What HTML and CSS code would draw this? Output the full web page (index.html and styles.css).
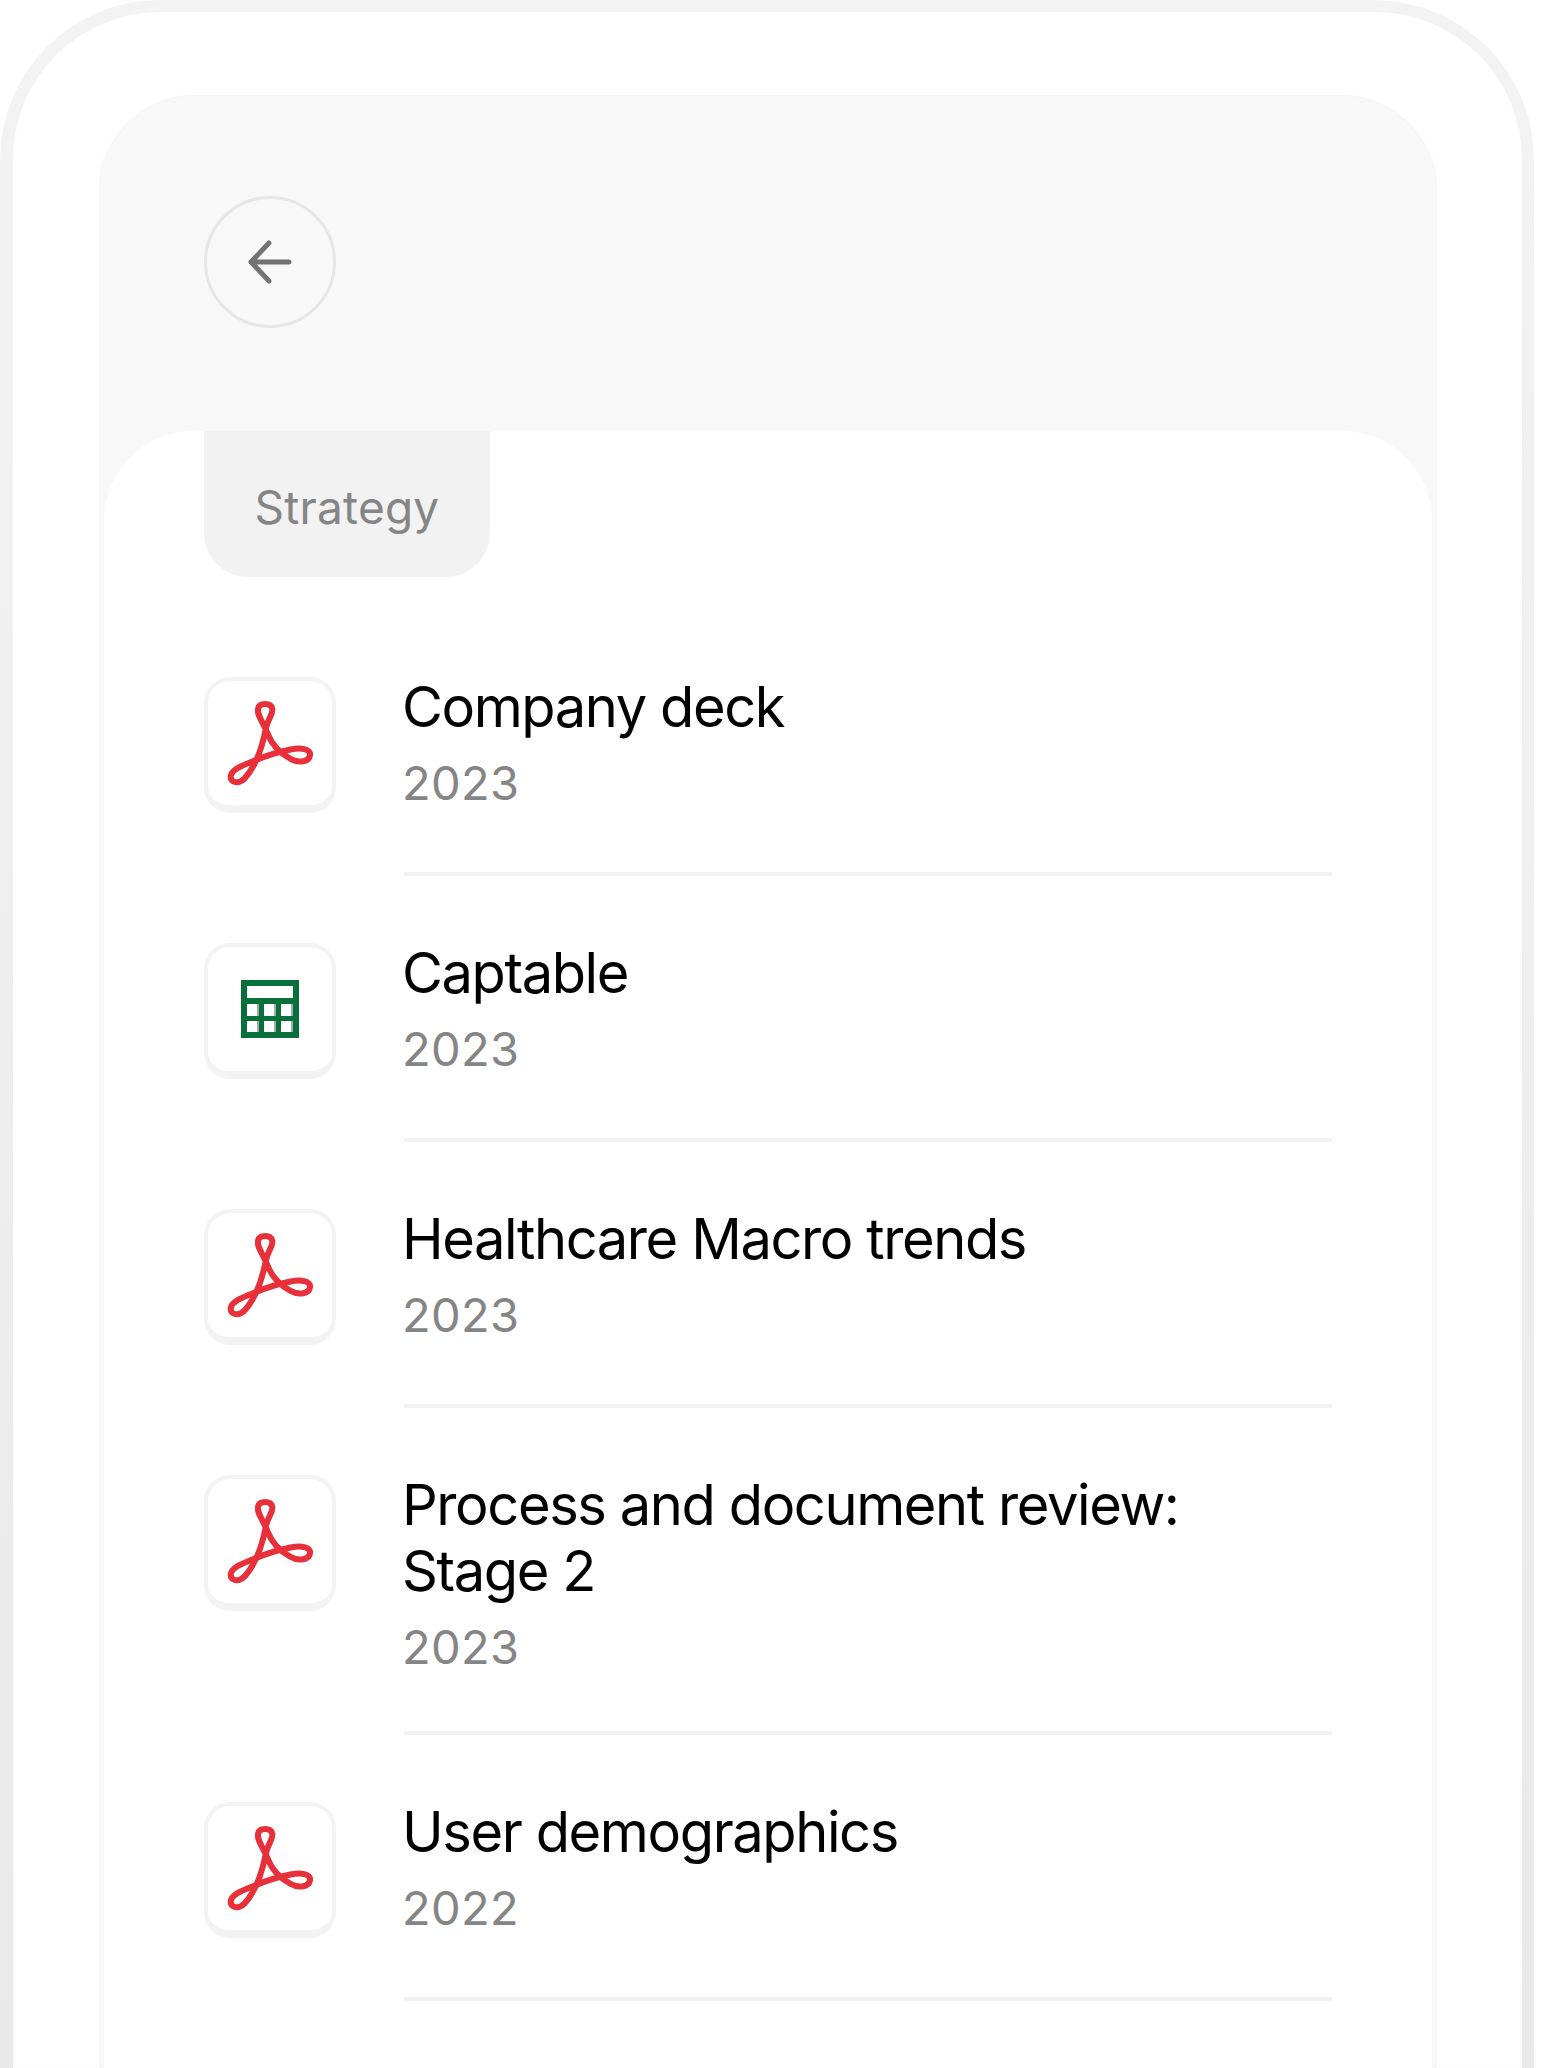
FILE: index.html
```html
<!DOCTYPE html>
<html lang="en">
<head>
    <meta charset="UTF-8">
    <meta name="viewport" content="width=device-width, initial-scale=1.0">
    <title>Documents</title>
    <link rel="stylesheet" href="styles.css">
</head>
<body>
    <svg class="sprites" width="0" height="0">
        <symbol id="pdf" viewBox="110 120 260 260">
            <path d="M226 205 C232 175 250 160 245 145 C240 128 208 128 203 145 C198 165 218 185 232 222 C245 255 270 280 300 296 C325 310 355 305 358 285 C360 265 330 262 300 268 C265 275 230 285 190 302 C160 315 125 325 121 348 C120 368 145 372 162 355 C185 330 210 290 226 205 Z" fill="none" stroke="#e8303a" stroke-width="18"/>
        </symbol>
        <symbol id="sheet" viewBox="0 0 58 58">
            <path fill="#08703a" d="M0 0H58V58H0Z"/>
            <path fill="#a8a8a8" d="M16 24H18V36H16ZM33 24H35V36H33ZM50 24H52V36H50ZM16 41H18V52H16ZM33 41H35V52H33ZM50 41H52V52H50Z"/>
            <path fill="#fff" d="M6 6H52V18H6ZM6 24H16V36H6ZM23 24H33V36H23ZM40 24H50V36H40ZM6 41H16V52H6ZM23 41H33V52H23ZM40 41H50V52H40Z"/>
        </symbol>
    </svg>

    <div class="phone">
        <div class="screen">
            <main class="panel">
                <header class="panel-head">
                    <button class="back" aria-label="Back">
                        <svg width="44" height="44" viewBox="0 0 44 44" fill="none" stroke="#737373" stroke-width="5" stroke-linecap="round" stroke-linejoin="round">
                            <path d="M41 22H3M21 3L3 22L21 41"/>
                        </svg>
                    </button>
                </header>

                <section class="sheet">
                    <div class="tab">Strategy</div>

                    <ul class="docs">
                        <li class="doc">
                            <div class="tile"><svg class="icon-pdf"><use href="#pdf"/></svg></div>
                            <div class="doc-body">
                                <div class="doc-title">Company deck</div>
                                <div class="doc-year">2023</div>
                            </div>
                        </li>
                        <li class="doc">
                            <div class="tile"><svg class="icon-sheet"><use href="#sheet"/></svg></div>
                            <div class="doc-body">
                                <div class="doc-title">Captable</div>
                                <div class="doc-year">2023</div>
                            </div>
                        </li>
                        <li class="doc">
                            <div class="tile"><svg class="icon-pdf"><use href="#pdf"/></svg></div>
                            <div class="doc-body">
                                <div class="doc-title">Healthcare Macro trends</div>
                                <div class="doc-year">2023</div>
                            </div>
                        </li>
                        <li class="doc">
                            <div class="tile"><svg class="icon-pdf"><use href="#pdf"/></svg></div>
                            <div class="doc-body wrapped">
                                <div class="doc-title">Process and document review:<br>Stage 2</div>
                                <div class="doc-year">2023</div>
                            </div>
                        </li>
                        <li class="doc">
                            <div class="tile"><svg class="icon-pdf"><use href="#pdf"/></svg></div>
                            <div class="doc-body">
                                <div class="doc-title">User demographics</div>
                                <div class="doc-year">2022</div>
                            </div>
                        </li>
                        <li class="doc">
                            <div class="tile"></div>
                        </li>
                    </ul>
                </section>
            </main>
        </div>
    </div>
</body>
</html>
```

FILE: styles.css
```css
html, body {
    margin: 0;
    height: 2068px;
    overflow: hidden;
    background-color: white;
}
body {
    font-family: 'Inter', sans-serif;
}
.sprites {
    position: absolute;
}
.phone {
    box-sizing: border-box;
    width: 1534px;
    height: 2068px;
    padding: 12px 12px 0 13px;
    border-radius: 160px 160px 0 0;
    background: linear-gradient(#f3f3f3, #e9e9e9);
}
.screen {
    height: 100%;
    padding: 83px 85px 0 86px;
    box-sizing: border-box;
    border-radius: 147px 147px 0 0;
    background-color: white;
    box-shadow: inset 0 0 8px rgba(0, 0, 0, 0.012);
}
.panel {
    display: flex;
    flex-direction: column;
    height: 100%;
    padding: 0 5px;
    box-sizing: border-box;
    overflow: hidden;
    border-radius: 96px 96px 0 0;
    background-color: #f8f8f8;
    box-shadow: inset 0 0 0 1px #f5f5f5, 0 0 16px rgba(0, 0, 0, 0.012);
}
.panel-head {
    flex: none;
    height: 336px;
    box-sizing: border-box;
    padding: 101px 0 0 100px;
}
.back {
    display: flex;
    align-items: center;
    justify-content: center;
    width: 132px;
    height: 132px;
    padding: 0;
    border: 3px solid #e6e6e6;
    border-radius: 50%;
    background: none;
}
.sheet {
    flex: 1;
    min-height: 0;
    overflow: hidden;
    padding: 0 100px;
    border-radius: 90px 90px 0 0;
    background-color: white;
}
.tab {
    width: 286px;
    height: 146px;
    box-sizing: border-box;
    padding-top: 46px;
    border-radius: 0 0 44px 44px;
    background-color: #f2f2f2;
    color: #858585;
    font-size: 46px;
    letter-spacing: 0.2px;
    line-height: 60px;
    text-align: center;
}
.docs {
    list-style: none;
    margin: 100px 0 0;
    padding: 0;
}
.doc {
    display: flex;
    gap: 68px;
    margin-bottom: 67px;
}
.tile {
    flex: none;
    display: flex;
    align-items: center;
    justify-content: center;
    box-sizing: border-box;
    width: 132px;
    height: 136px;
    border: 4px solid #f3f3f3;
    border-bottom-width: 8px;
    border-radius: 26px;
    background-color: white;
}
.icon-pdf {
    width: 87px;
    height: 87px;
}
.icon-sheet {
    width: 58px;
    height: 58px;
}
.doc-body {
    flex: 1;
    padding-bottom: 56px;
    border-bottom: 4px solid #f1f1f1;
}
.doc-body.wrapped {
    padding-bottom: 51px;
}
.doc-title {
    margin: -3px 0 0 -2px;
    color: #000;
    font-size: 56px;
    letter-spacing: -1.4px;
    line-height: 66px;
}
.doc-year {
    margin: 10px 0 0 -2px;
    color: #858585;
    font-size: 47px;
    letter-spacing: 0.3px;
    line-height: 66px;
}
```
